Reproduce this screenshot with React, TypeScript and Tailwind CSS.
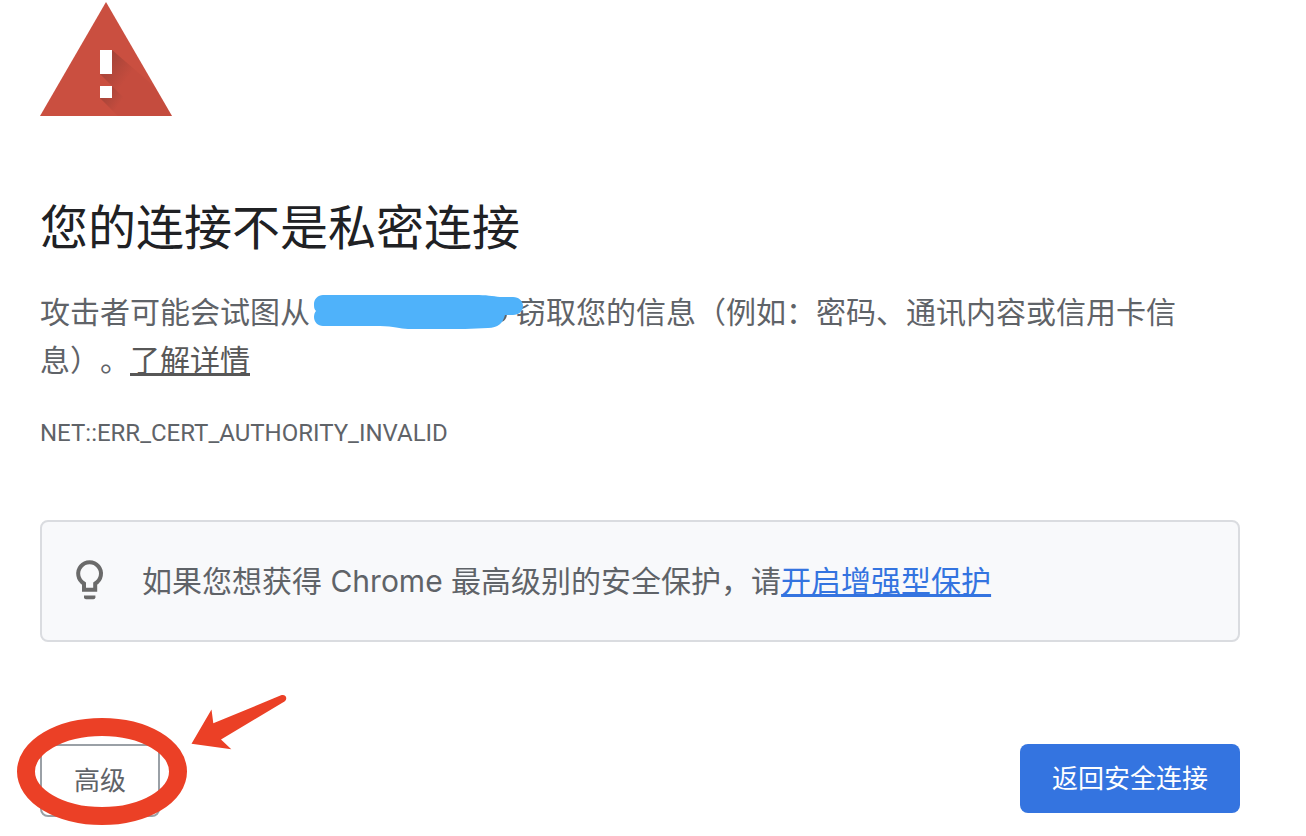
function WarningIcon() {
  return (
    <svg width="132" height="116" viewBox="0 0 132 116" aria-hidden="true">
      <defs>
        <linearGradient id="shadeBar" gradientUnits="userSpaceOnUse" x1="64" y1="64" x2="86" y2="80">
          <stop offset="0" stopColor="#6a352e" stopOpacity="0.36" />
          <stop offset="1" stopColor="#6a352e" stopOpacity="0" />
        </linearGradient>
        <linearGradient id="shadeDot" gradientUnits="userSpaceOnUse" x1="64" y1="92" x2="80" y2="103">
          <stop offset="0" stopColor="#6a352e" stopOpacity="0.36" />
          <stop offset="1" stopColor="#6a352e" stopOpacity="0" />
        </linearGradient>
      </defs>
      <path d="M66 2L132 116H0Z" fill="#ca4f40" />
      <path d="M72 50L115 87L132 116H78L60 98L72 86L60 74Z" fill="#a8422f" fillOpacity="0.14" />
      <path d="M72 50L115 87L132 116H102L60 74Z" fill="url(#shadeBar)" />
      <path d="M72 86L102 116H78L60 98Z" fill="url(#shadeDot)" />
      <path d="M60 50h12v24H60zM60 86h12v12H60z" fill="#fff" />
    </svg>
  );
}

function BulbIcon() {
  return (
    <svg className="shrink-0" width="36" height="44" viewBox="0 0 36 44" fill="none" aria-hidden="true">
      <path
        d="M12 30.7V24.6A11.4 11.4 0 1 1 23.2 24.6V30.7Z"
        stroke="#6a6a6a"
        strokeWidth="4"
      />
      <path d="M12 36.4h11.4v1.8a2 2 0 0 1-2 2h-7.4a2 2 0 0 1-2-2z" fill="#6a6a6a" />
    </svg>
  );
}

function HiddenSite() {
  return (
    <span className="relative inline-block h-6 w-[206px]">
      <svg className="absolute -top-2 left-0" width="218" height="40" viewBox="0 0 218 40" aria-hidden="true">
        <path d="M190 22h7c0 5-2 8-6 9z" fill="#5f6368" />
        <path
          d="M13 4H165C176 4 183 5 190 6H203C209 6 213 10 213 15C213 20 209 24 203 24H195C193 32 188 37 178 37L155 38H98C90 38 84 35 70 35H13C8 35 4 31 4 26C4 23 5 21 6 20C4 18 4 16 4 13C4 8 8 4 13 4Z"
          fill="#4fb2fa"
        />
      </svg>
    </span>
  );
}

export default function App() {
  return (
    <main
      lang="zh-CN"
      className="min-h-screen bg-white pr-[66px] pl-10 font-['Inter','Noto_Sans_CJK_SC',sans-serif] text-[#5f6368] [text-spacing-trim:space-all]"
    >
      <WarningIcon />
      <h1 className="mt-20 text-5xl leading-[64px] text-[#202124]">您的连接不是私密连接</h1>
      <p className="mt-7 text-[30px] leading-[48px]">
        攻击者可能会试图从
        <HiddenSite />
        {"窃取您的信息\uff08例如\uff1a密码、通讯内容或信用卡信息\uff09。"}
        <a
          href="#details"
          className="text-[#575757] underline decoration-[3px] underline-offset-2 [text-decoration-skip-ink:none]"
        >
          了解详情
        </a>
      </p>
      <p className="mt-[31px] font-['Roboto',sans-serif] text-2xl leading-9">NET::ERR_CERT_AUTHORITY_INVALID</p>

      <section className="mt-[69px] flex items-center gap-[34px] rounded-lg border-2 border-[#dadce0] bg-[#f8f9fb] px-[30px] py-[34px]">
        <BulbIcon />
        <p className="text-[30px] leading-[50px]">
          {"如果您想获得 Chrome 最高级别的安全保护\uff0c请"}
          <a
            href="#enhanced"
            className="text-[#3474e0] underline decoration-[3px] underline-offset-2 [text-decoration-skip-ink:none]"
          >
            开启增强型保护
          </a>
        </p>
      </section>

      <div className="mt-[102px] flex items-start justify-between text-[26px]">
        <div className="relative">
          <button
            type="button"
            className="rounded-lg border-2 border-[#9aa0a6] px-8 py-4 leading-[37px]"
          >
            高级
          </button>
          <svg
            className="pointer-events-none absolute -top-14 -left-6"
            width="280"
            height="148"
            viewBox="16 688 280 148"
            aria-hidden="true"
          >
            <ellipse cx="102" cy="771.5" rx="76" ry="44.5" fill="none" stroke="#eb4026" strokeWidth="18" />
            <path
              d="M191.5 743.8L211.5 709.5L213.3 723.3L281 695.3C286 693.8 288 698.8 284.5 701.5L221 739.5L231.3 749.2Z"
              fill="#eb4026"
            />
          </svg>
        </div>
        <button type="button" className="rounded-lg bg-[#3474e0] px-8 py-4 leading-[37px] text-white">
          返回安全连接
        </button>
      </div>
    </main>
  );
}
